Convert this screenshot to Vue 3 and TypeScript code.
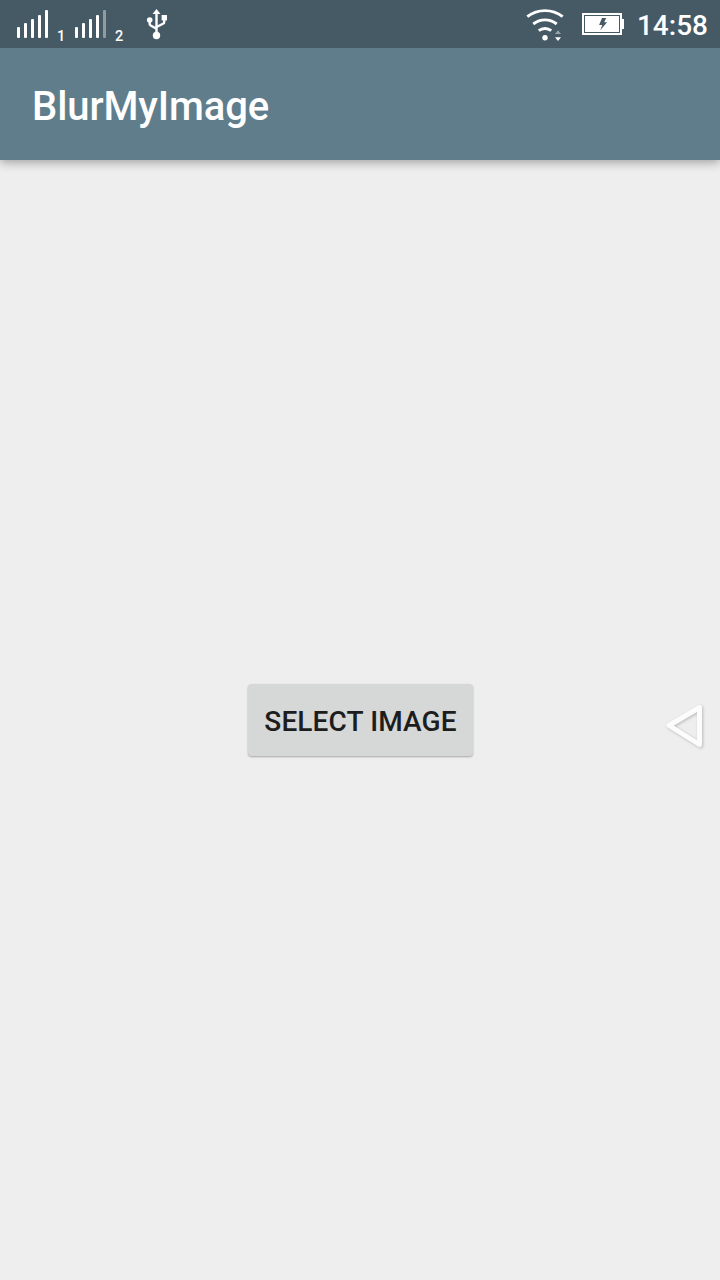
<script setup lang="ts">
interface Sim {
  slot: number
  level: number
}

const sims: Sim[] = [
  { slot: 1, level: 5 },
  { slot: 2, level: 4 },
]
const bars = [
  { x: 0, height: 11 },
  { x: 7, height: 15 },
  { x: 14, height: 19 },
  { x: 21, height: 23 },
  { x: 28, height: 28 },
]
</script>

<template>
  <div class="screen">
    <header class="status">
      <div v-for="sim in sims" :key="sim.slot" class="sim">
        <svg width="31" height="28" viewBox="0 0 31 28">
          <rect
            v-for="(bar, i) in bars"
            :key="i"
            :x="bar.x"
            :y="28 - bar.height"
            width="3"
            :height="bar.height"
            rx="1"
            fill="#fff"
            :fill-opacity="i < sim.level ? 1 : 0.4"
          />
        </svg>
        <span class="slot">{{ sim.slot }}</span>
      </div>
      <svg class="usb" width="22" height="32" viewBox="0 0 22 32">
        <g fill="none" stroke="#fff" stroke-width="2.4">
          <path d="M10.500 4v23M3.700 12v4q0 1 1 1.500l5.800 3.200M18.200 9v5q0 1.200-1.200 1.800L10.500 19" />
        </g>
        <path d="M10.500 1l4 5h-8z" fill="#fff" />
        <circle cx="3.700" cy="12" r="2.800" fill="#fff" />
        <rect x="15.600" y="7" width="5.400" height="5.400" fill="#fff" />
        <circle cx="10.500" cy="27.500" r="3.700" fill="#fff" />
      </svg>
      <div class="right">
        <svg class="wifi" width="38" height="34" viewBox="0 0 38 34">
          <g fill="none" stroke="#fff" stroke-width="2.900">
            <path d="M1.300 9.700Q9.200 3.600 19 3.600T36.700 9.700" />
            <path d="M7.300 17Q12.500 12.900 19 12.900T30.700 17" />
            <path d="M12.800 23.700Q15.500 21.500 19 21.500T25.200 23.700" />
          </g>
          <circle cx="19" cy="30.700" r="2.700" fill="#fff" />
          <path d="M32 23.300l3 3.700h-6z" fill="#fff" fill-opacity="0.45" />
          <path d="M32 34l3-3.700h-6z" fill="#fff" />
        </svg>
        <svg class="battery" width="42" height="22" viewBox="0 0 42 22">
          <path d="M0 0h40v6h2v10h-2v6H0z" fill="#fff" />
          <rect x="2.500" y="2.500" width="35" height="17" fill="none" stroke="#455a64" />
          <path d="M20 5h4.200l-2 4.200h2.900L18.200 17.300l2.100-5.300h-3.200z" fill="#455a64" />
        </svg>
        <time class="clock">14:58</time>
      </div>
    </header>
    <div class="toolbar">
      <h1>BlurMyImage</h1>
    </div>
    <main class="content">
      <button type="button" class="select">SELECT IMAGE</button>
    </main>
    <svg class="back" width="48" height="56" viewBox="0 0 48 56">
      <path d="M9 25.500L39.500 7.500v37z" />
    </svg>
  </div>
</template>

<style>
html,
body {
  margin: 0;
  background: #eee;
}
</style>

<style scoped>
.screen {
  position: relative;
  display: flex;
  flex-direction: column;
  width: 720px;
  height: 1280px;
  overflow: hidden;
  background: #eee;
  font-family: Roboto, sans-serif;
}
.status {
  display: flex;
  align-items: flex-start;
  box-sizing: border-box;
  height: 48px;
  padding-left: 17px;
  background: #455a64;
  color: #fff;
  z-index: 1;
}
.sim {
  display: flex;
  width: 58px;
  padding-top: 10px;
}
.slot {
  margin: 18px 0 0 9px;
  font-size: 14.5px;
  line-height: 17px;
  font-weight: 500;
}
.usb {
  margin: 8px 0 0 13px;
}
.right {
  display: flex;
  align-items: flex-start;
  margin-left: auto;
  padding-right: 12px;
}
.wifi {
  margin: 7px 18px 0 0;
}
.battery {
  margin: 13px 13px 0 0;
}
.clock {
  padding-top: 9px;
  font-size: 28px;
  line-height: 34px;
  font-weight: 500;
}
.toolbar {
  display: flex;
  align-items: center;
  height: 112px;
  padding: 0 32px;
  background: #607d8b;
  box-shadow: 0 3px 9px rgba(0, 0, 0, 0.3);
}
h1 {
  margin: 6px 0 0;
  color: #fff;
  font-size: 40px;
  line-height: 48px;
  font-weight: 500;
  letter-spacing: -0.1px;
}
.content {
  display: flex;
  flex: 1;
  align-items: center;
  justify-content: center;
}
.select {
  width: 225px;
  height: 72px;
  margin-left: 1px;
  padding: 2px 0 0;
  border: 0;
  border-radius: 4px;
  background: #d6d7d7;
  box-shadow: 0 1px 2px rgba(0, 0, 0, 0.3);
  color: #1d1d1d;
  font-family: inherit;
  font-size: 28px;
  font-weight: 500;
  letter-spacing: 0.12px;
  white-space: nowrap;
}
.back {
  position: absolute;
  top: 700px;
  left: 660px;
  fill: none;
  stroke: #fcfcfc;
  stroke-width: 5px;
  stroke-linejoin: round;
  filter: drop-shadow(1px 1px 1.500px rgba(0, 0, 0, 0.22));
}
</style>
